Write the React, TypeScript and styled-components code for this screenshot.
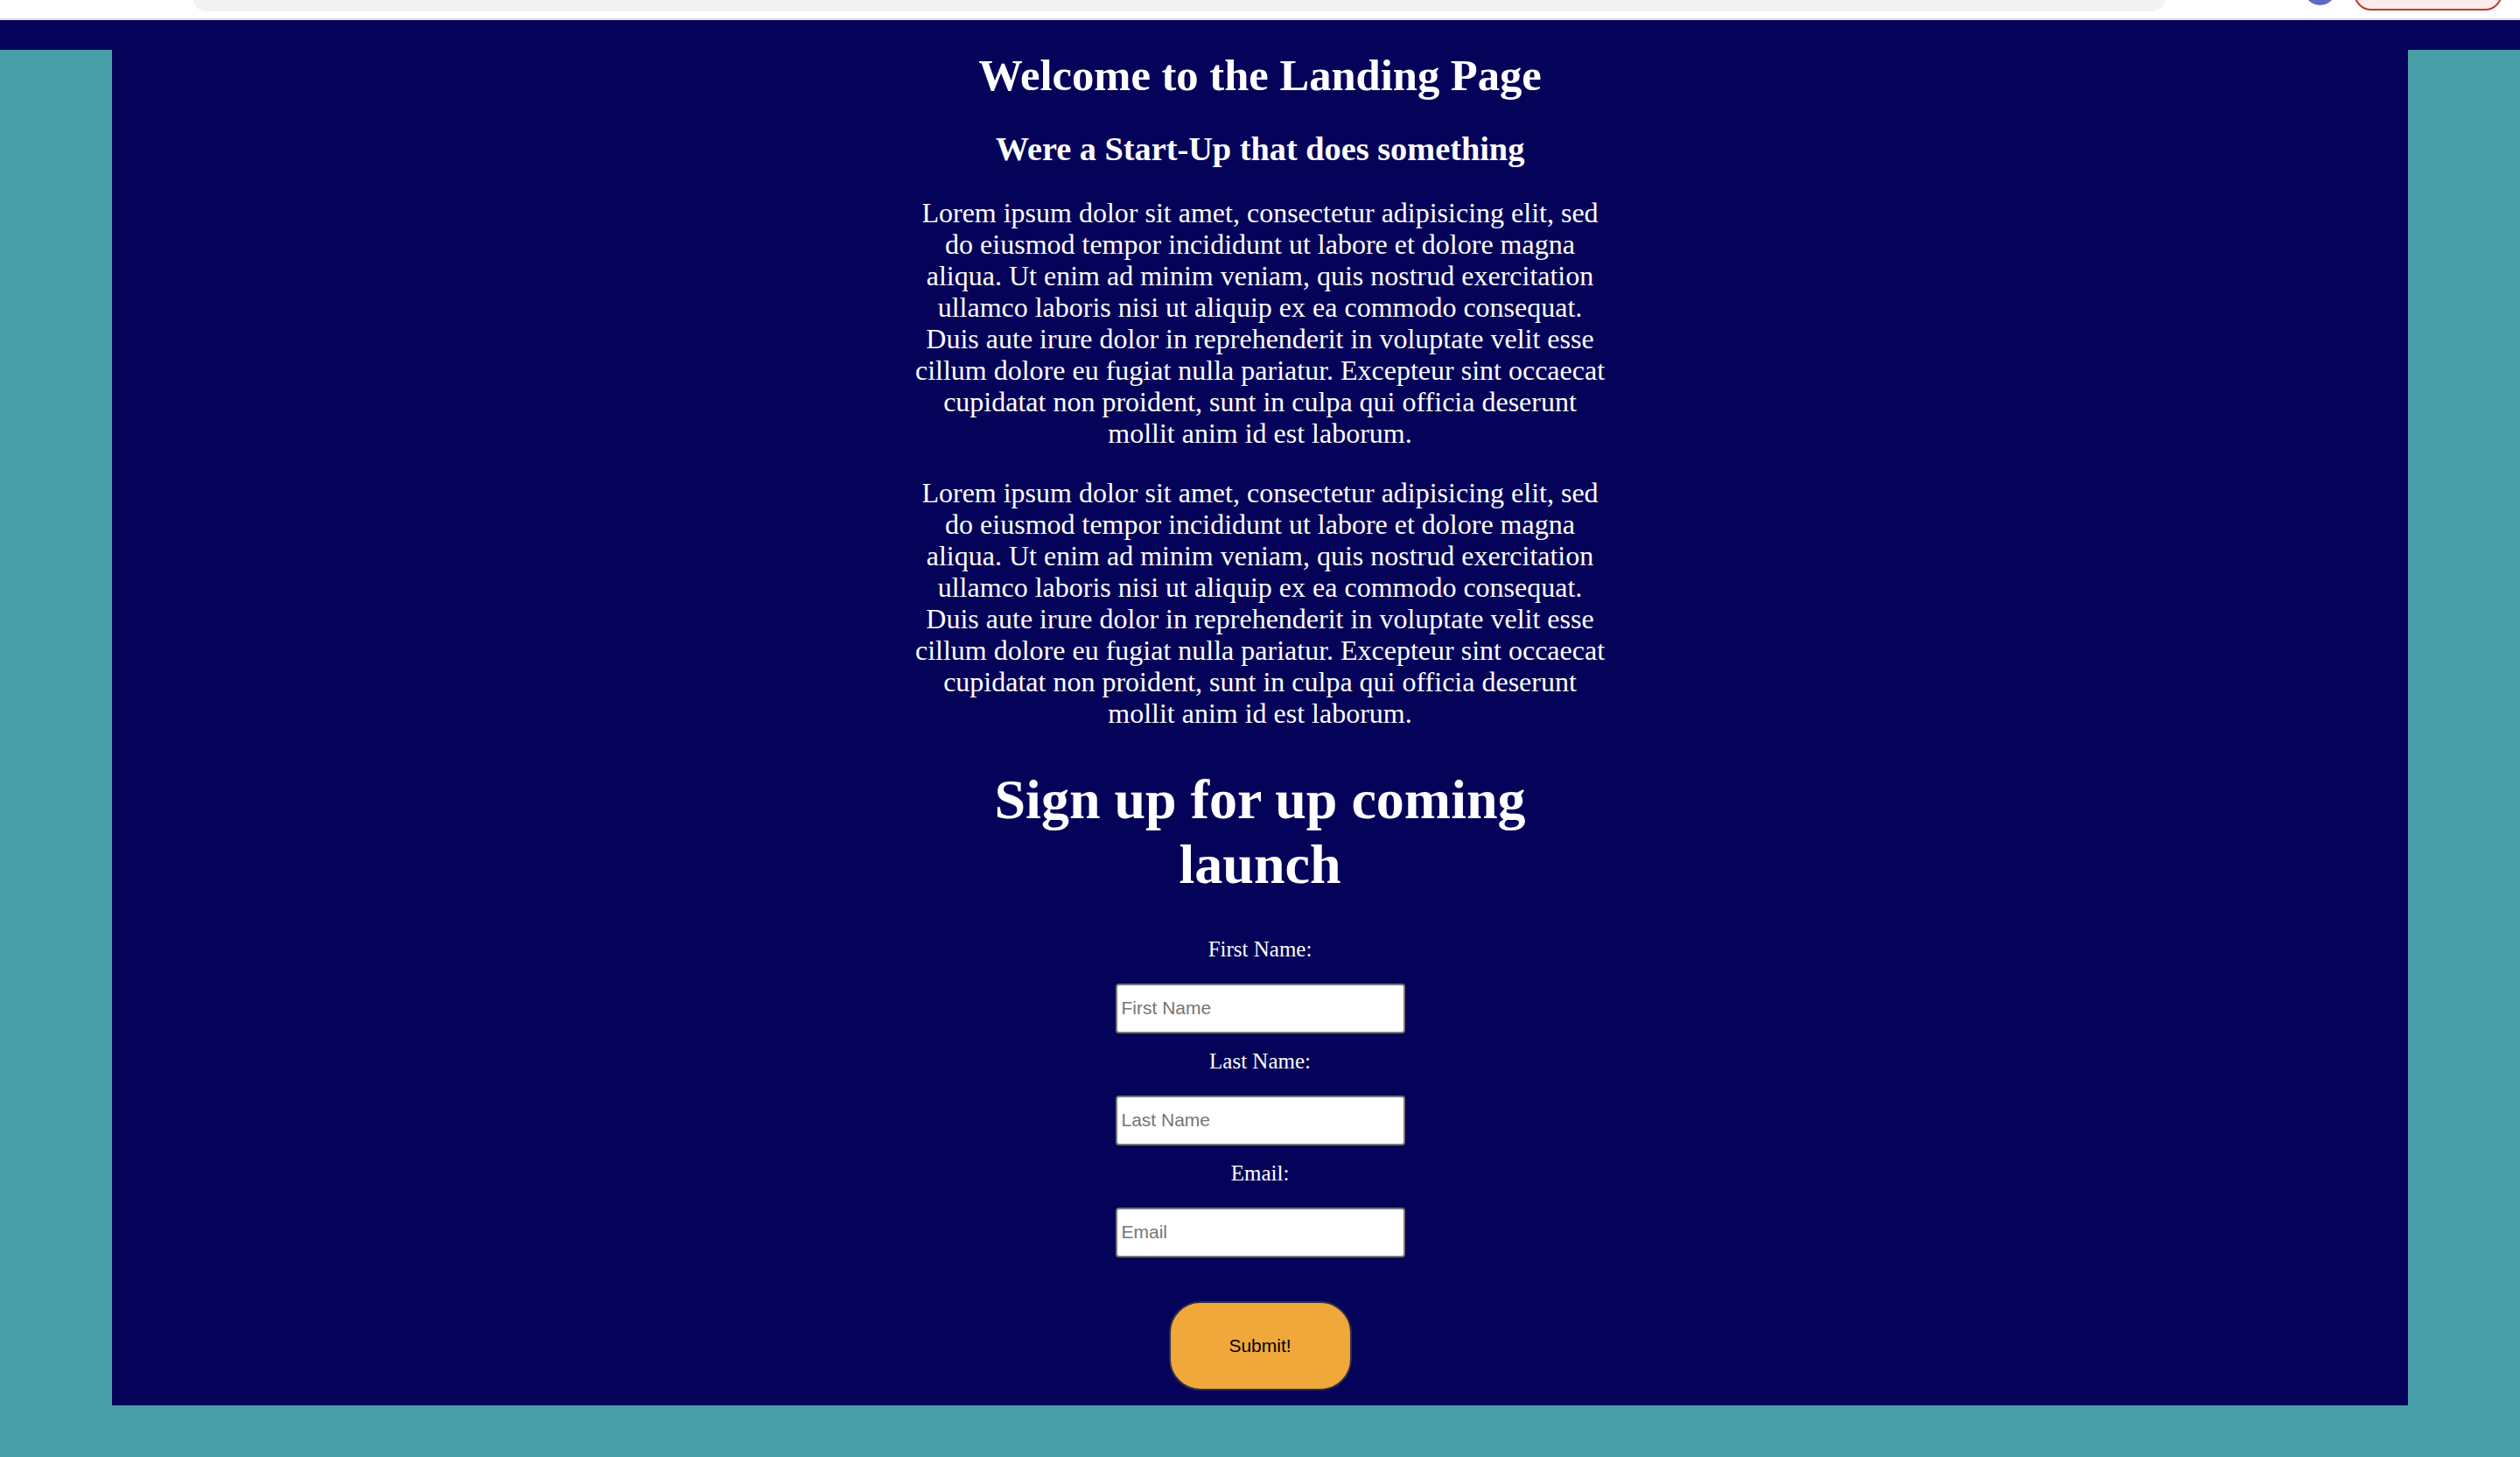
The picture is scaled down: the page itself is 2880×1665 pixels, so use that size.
import React from "react";
import styled, { createGlobalStyle } from "styled-components";

const NAVY = "#050359";
const TEAL = "#489ea7";

const GlobalStyle = createGlobalStyle`
  html, body {
    margin: 0;
    padding: 0;
    background: ${TEAL};
  }
  body {
    font-family: "Liberation Serif", "Times New Roman", serif;
  }
  * { box-sizing: border-box; }
`;

const Page = styled.div`
  min-height: 1665px;
  background: ${TEAL};
  display: flex;
  flex-direction: column;
`;

const Chrome = styled.div`
  height: 23px;
  background: #ffffff;
  border-bottom: 2px solid #d8d8d8;
  overflow: hidden;
  display: flex;
  align-items: flex-start;
  padding: 0 20px 0 220px;
`;

const AddressBar = styled.div`
  width: 2255px;
  height: 40px;
  margin-top: -27px;
  background: #f1f3f4;
  border-radius: 16px;
  flex-shrink: 0;
`;

const Avatar = styled.div`
  width: 37px;
  height: 37px;
  margin-top: -31px;
  margin-left: 158px;
  border-radius: 50%;
  background: #5f6bc0;
  flex-shrink: 0;
`;

const ProfilePill = styled.div`
  width: 170px;
  height: 40px;
  margin-top: -28px;
  margin-left: 20px;
  border-radius: 20px;
  background: #f9ecea;
  border: 2px solid #bf3a2b;
  flex-shrink: 0;
`;

const TopBand = styled.div`
  height: 34px;
  background: ${NAVY};
`;

const Gutter = styled.div`
  padding: 0 128px 58px;
`;

const Main = styled.main`
  background: ${NAVY};
  color: #ffffff;
  display: flex;
  flex-direction: column;
  align-items: center;
  text-align: center;
  padding-bottom: 17px;
`;

const Title = styled.h1`
  margin: 0;
  font-size: 50.6px;
  font-weight: bold;
  line-height: normal;
`;

const Subtitle = styled.h2`
  margin: 33px 0 0;
  font-size: 38.3px;
  font-weight: bold;
  line-height: normal;
`;

const Paragraph = styled.p<{ $gap: number }>`
  margin: ${(p) => p.$gap}px 0 0;
  width: 800px;
  font-size: 32px;
  line-height: 36px;
`;

const SignupTitle = styled.h1`
  margin: 43.6px 0 0;
  width: 800px;
  font-size: 64px;
  font-weight: bold;
  line-height: normal;
`;

const Form = styled.form`
  margin-top: 46.4px;
  display: flex;
  flex-direction: column;
  align-items: center;
`;

const Field = styled.div<{ $first?: boolean }>`
  display: flex;
  flex-direction: column;
  align-items: center;
  margin-top: ${(p) => (p.$first ? 0 : 18)}px;
`;

const Label = styled.label`
  font-size: 25px;
  line-height: normal;
  color: #ffffff;
`;

const Input = styled.input`
  margin-top: 25px;
  width: 331px;
  height: 57px;
  border: 2px solid #767676;
  border-radius: 4px;
  background: #ffffff;
  padding: 0 5px;
  font-family: "Liberation Sans", Arial, sans-serif;
  font-size: 21px;
  color: #000000;
  &::placeholder {
    color: #757575;
  }
`;

const SubmitButton = styled.button`
  margin-top: 50px;
  width: 209px;
  height: 102px;
  border: 2px solid #30304a;
  border-radius: 36px;
  background: #f0a83b;
  font-family: "Liberation Sans", Arial, sans-serif;
  font-size: 21px;
  color: #000000;
  cursor: pointer;
`;

const LOREM =
  "Lorem ipsum dolor sit amet, consectetur adipisicing elit, sed do eiusmod tempor incididunt ut labore et dolore magna aliqua. Ut enim ad minim veniam, quis nostrud exercitation ullamco laboris nisi ut aliquip ex ea commodo consequat. Duis aute irure dolor in reprehenderit in voluptate velit esse cillum dolore eu fugiat nulla pariatur. Excepteur sint occaecat cupidatat non proident, sunt in culpa qui officia deserunt mollit anim id est laborum.";

const fields = [
  { id: "first", label: "First Name:", placeholder: "First Name", type: "text" },
  { id: "last", label: "Last Name:", placeholder: "Last Name", type: "text" },
  { id: "email", label: "Email:", placeholder: "Email", type: "email" },
];

export default function App() {
  return (
    <>
      <GlobalStyle />
      <Page>
        <Chrome>
          <AddressBar />
          <Avatar />
          <ProfilePill />
        </Chrome>
        <TopBand />
        <Gutter>
          <Main>
            <Title>Welcome to the Landing Page</Title>
            <Subtitle>Were a Start-Up that does something</Subtitle>
            <Paragraph $gap={33}>{LOREM}</Paragraph>
            <Paragraph $gap={32}>{LOREM}</Paragraph>
            <SignupTitle>Sign up for up coming launch</SignupTitle>
            <Form onSubmit={(e) => e.preventDefault()}>
              {fields.map((f, i) => (
                <Field key={f.id} $first={i === 0}>
                  <Label htmlFor={f.id}>{f.label}</Label>
                  <Input id={f.id} type={f.type} placeholder={f.placeholder} />
                </Field>
              ))}
              <SubmitButton type="submit">Submit!</SubmitButton>
            </Form>
          </Main>
        </Gutter>
      </Page>
    </>
  );
}
